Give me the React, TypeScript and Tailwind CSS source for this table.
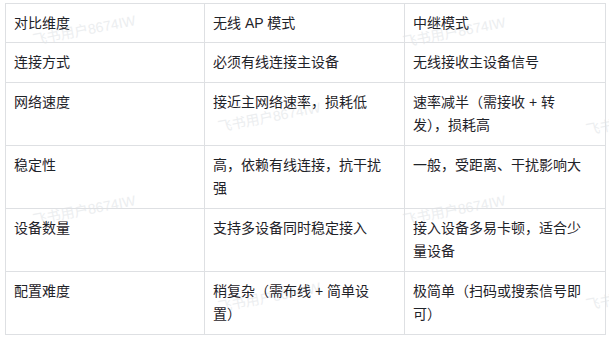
import React from "react";

const rows: string[][][] = [
  [["对比维度"], ["无线 AP 模式"], ["中继模式"]],
  [["连接方式"], ["必须有线连接主设备"], ["无线接收主设备信号"]],
  [["网络速度"], ["接近主网络速率，损耗低"], ["速率减半（需接收 + 转", "发），损耗高"]],
  [["稳定性"], ["高，依赖有线连接，抗干扰", "强"], ["一般，受距离、干扰影响大"]],
  [["设备数量"], ["支持多设备同时稳定接入"], ["接入设备多易卡顿，适合少", "量设备"]],
  [["配置难度"], ["稍复杂（需布线 + 简单设", "置）"], ["极简单（扫码或搜索信号即", "可）"]],
];

const marks: [number, number][] = [
  [33, 33],
  [403, 35],
  [218, 120],
  [586, 123],
  [33, 213],
  [403, 213],
  [218, 300],
  [586, 298],
];

export default function App() {
  return (
    <div
      className="relative w-[609px] h-[339px] overflow-hidden bg-white pt-[3px] pl-[5px]"
      style={{ fontFamily: '"Liberation Sans", "Noto Sans CJK SC", sans-serif' }}
    >
      <div className="pointer-events-none absolute inset-0">
        {marks.map(([x, y], i) => (
          <span
            key={i}
            className="absolute origin-left whitespace-nowrap text-[14px] leading-[14px] text-[#eceef0]"
            style={{ left: x, top: y, transform: "rotate(-11deg)" }}
          >
            飞书用户8674IW
          </span>
        ))}
      </div>
      <div className="relative grid w-[601px] grid-cols-[199px_200px_201px] border-l border-t border-[#dee0e3] text-[14px] leading-[23px] text-[#1f2329]">
        {rows.map((row, ri) =>
          row.map((cell, ci) => (
            <div
              key={`${ri}-${ci}`}
              className={`border-b border-r border-[#dee0e3] px-2 ${
                ri === 0 ? "pt-[8px] pb-[7px]" : "py-2"
              }`}
            >
              {cell.map((line, li) => (
                <div key={li} className="whitespace-pre">
                  {line}
                </div>
              ))}
            </div>
          ))
        )}
      </div>
    </div>
  );
}
